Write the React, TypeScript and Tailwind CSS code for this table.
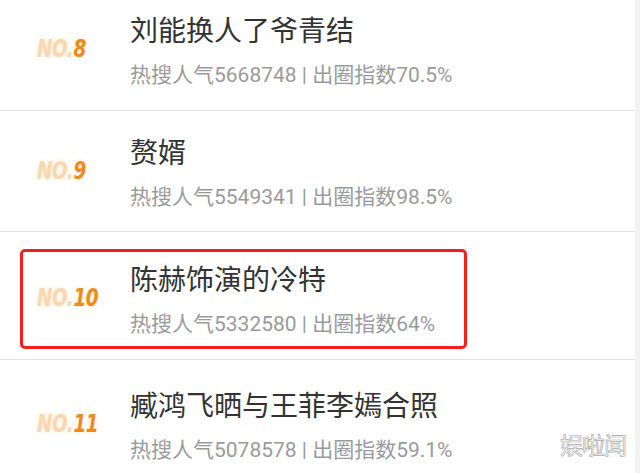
const rows = [
  { no: '8', title: '刘能换人了爷青结', heat: '5668748', idx: '70.5%' },
  { no: '9', title: '赘婿', heat: '5549341', idx: '98.5%' },
  { no: '10', title: '陈赫饰演的冷特', heat: '5332580', idx: '64%' },
  { no: '11', title: '臧鸿飞晒与王菲李嫣合照', heat: '5078578', idx: '59.1%' },
];

function Badge({ no }: { no: string }) {
  return (
    <div className="w-[93px] shrink-0 self-center -mt-[3px]">
      <div className="inline-block origin-left scale-x-[0.82] italic font-bold text-[25px] leading-none tracking-[-0.5px] [font-family:'Liberation_Sans_Narrow','DejaVu_Sans_Condensed',sans-serif] [text-shadow:0_0_6px_rgba(250,215,170,0.6)]">
        <span className="text-[#f8d8b0]">NO.</span>
        <span className="text-[#ee8a1c]">{no}</span>
      </div>
    </div>
  );
}

function Content({ no, title, heat, idx }: (typeof rows)[number]) {
  return (
    <div className="flex">
      <Badge no={no} />
      <div className="flex flex-col">
        <div className="text-[28px] leading-[36px] text-[#333333] whitespace-nowrap">{title}</div>
        <div className="mt-[14px] text-[21px] leading-[28px] text-[#9a9a9a] whitespace-nowrap [font-family:Roboto,'Noto_Sans_CJK_SC',sans-serif]">
          热搜人气{heat} | 出圈指数{idx}
        </div>
      </div>
    </div>
  );
}

export default function App() {
  return (
    <div className="relative flex w-[640px] h-[473px] overflow-hidden bg-white [font-family:'Noto_Sans_CJK_SC',sans-serif]">
      <div className="w-[635px] flex flex-col">
        <div className="h-[111px] shrink-0 pt-[11px] pl-[37px] border-b border-[#e2e2e2]">
          <Content {...rows[0]} />
        </div>
        <div className="h-[121px] shrink-0 pt-[22px] pl-[37px] border-b border-[#e2e2e2]">
          <Content {...rows[1]} />
        </div>
        <div className="h-[128px] shrink-0 pt-[17px] pl-[20px] border-b border-[#e2e2e2]">
          <div className="w-[447px] h-[100px] border-[3px] border-[#f5201c] rounded-[5px] pt-[8px] pl-[14px]">
            <Content {...rows[2]} />
          </div>
        </div>
        <div className="flex-1 pt-[26px] pl-[37px]">
          <Content {...rows[3]} />
        </div>
      </div>
      <div className="flex-1 bg-[#f2f2f2]" />
      <div className="absolute left-[560px] top-[430px] text-[23px] leading-[28px] tracking-[-1px] text-white [-webkit-text-stroke:0.7px_#aaaaaa]">
        娱啦闻
      </div>
    </div>
  );
}
